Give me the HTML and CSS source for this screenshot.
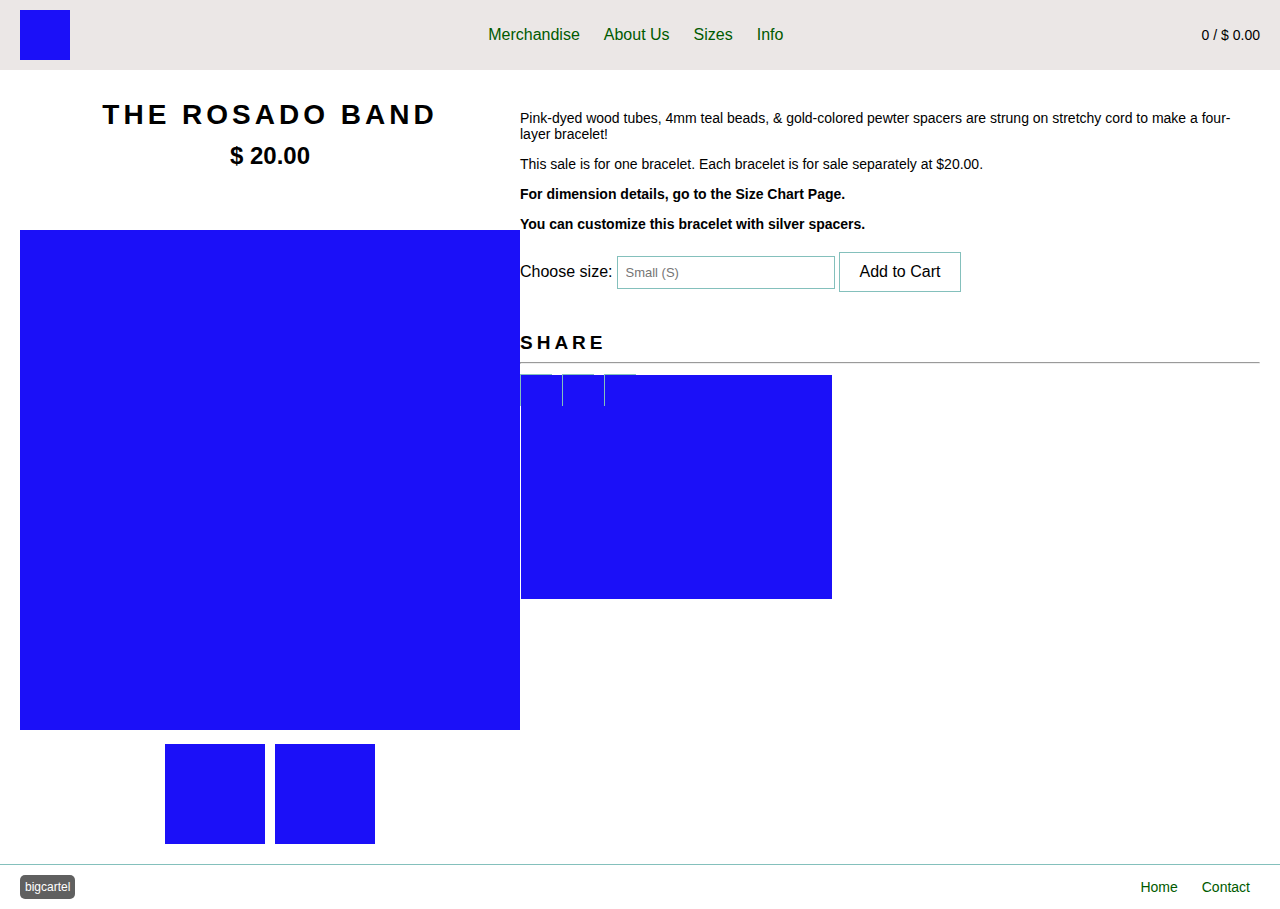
FILE: index.html
```html
<!DOCTYPE html>
<html lang="en">
<head>
<meta charset="utf-8">
<meta name="viewport" content="width=device-width, initial-scale=1">
<title>The Rosado Band</title>
<link rel="stylesheet" href="styles.css">
</head>
<body>
<header class="site-header">
  <a class="logo" href="#" aria-label="Shop home"></a>
  <nav class="main-nav">
    <a href="#">Merchandise</a>
    <a href="#">About Us</a>
    <a href="#">Sizes</a>
    <a href="#">Info</a>
  </nav>
  <a class="cart" href="#">0 / $ 0.00</a>
</header>
<main class="product">
  <section class="gallery">
    <h1 class="title">The Rosado Band</h1>
    <h2 class="price">$ 20.00</h2>
    <div class="photo"></div>
    <div class="thumbs">
      <a class="thumb" href="#" aria-label="Photo 1"></a>
      <a class="thumb" href="#" aria-label="Photo 2"></a>
    </div>
  </section>
  <section class="details">
    <div class="description">
      <p>Pink-dyed wood tubes, 4mm teal beads, &amp; gold-colored pewter spacers are strung on stretchy cord to make a four-layer bracelet!</p>
      <p>This sale is for one bracelet. Each bracelet is for sale separately at $20.00.</p>
      <p><strong>For dimension details, go to the Size Chart Page.</strong></p>
      <p><strong>You can customize this bracelet with silver spacers.</strong></p>
    </div>
    <form class="order">
      <label for="size">Choose size:</label>
      <input class="size" id="size" type="text" placeholder="Small (S)">
      <button class="add" type="button">Add to Cart</button>
    </form>
    <h3 class="share-title">Share</h3>
    <hr class="rule">
    <div class="share">
      <a class="share-link" href="#" aria-label="Share 1"><span class="share-image"></span></a>
      <a class="share-link" href="#" aria-label="Share 2"><span class="share-image"></span></a>
      <a class="share-link" href="#" aria-label="Share 3"><span class="share-image"></span></a>
    </div>
  </section>
</main>
<footer class="site-footer">
  <a class="badge" href="#">bigcartel</a>
  <nav class="footer-nav">
    <a href="#">Home</a>
    <a href="#">Contact</a>
  </nav>
</footer>
</body>
</html>
```

FILE: styles.css
```css
* { box-sizing: border-box; }

body {
  margin: 0;
  background: #fff;
  color: #000;
  font: 16px/18px "Liberation Sans", Arial, sans-serif;
}

a { color: #005a00; text-decoration: none; }

.site-header {
  display: flex;
  justify-content: space-between;
  align-items: center;
  padding: 10px 20px;
  background: #ebe7e6;
}

.logo { width: 50px; height: 50px; background: #1b10f8; }

.main-nav { display: flex; gap: 24px; }

.cart { color: #000; font-size: 14px; }

.product {
  display: flex;
  align-items: flex-start;
  padding: 0 20px 20px;
}

.gallery { flex: 0 0 500px; text-align: center; }

.title {
  margin: 28px 0 0;
  font-size: 28px;
  line-height: 34px;
  letter-spacing: 4px;
  text-transform: uppercase;
}

.price { margin: 10px 0 60px; font-size: 24px; line-height: 28px; }

.photo { aspect-ratio: 1; background: #1b10f8; }

.thumbs {
  display: flex;
  justify-content: center;
  gap: 10px;
  margin-top: 14px;
}

.thumb { width: 100px; height: 100px; background: #1b10f8; }

.details { flex: 1; min-width: 0; padding-top: 40px; }

.description {
  display: grid;
  gap: 14px;
  font-size: 14px;
  line-height: 16px;
}

.description p { margin: 0; }

.order {
  display: flex;
  align-items: center;
  gap: 4px;
  margin-top: 20px;
}

.size {
  width: 218px;
  height: 33px;
  padding: 0 8px;
  border: 1px solid #84c0bc;
  border-radius: 0;
  background: #fff;
  font: 13px "Liberation Sans", Arial, sans-serif;
}

.size::placeholder { color: #757575; }

.add {
  padding: 10px 20px;
  border: 1px solid #84c0bc;
  background: #fff;
  color: #000;
  font: inherit;
}

.share-title {
  margin: 40px 0 8px;
  font-size: 19px;
  line-height: 22px;
  letter-spacing: 4px;
  text-transform: uppercase;
}

.rule { margin: 0; }

.share { display: flex; gap: 10px; margin-top: 10px; }

.share-link {
  width: 32px;
  height: 32px;
  border: 1px solid #84c0bc;
}

.share-image {
  display: block;
  width: 227px;
  height: 224px;
  background: #1b10f8;
}

.site-footer {
  display: flex;
  justify-content: space-between;
  align-items: center;
  padding: 10px 30px 10px 20px;
  border-top: 1px solid #84c0bc;
  font-size: 14px;
}

.badge {
  padding: 3px 5px;
  border-radius: 5px;
  background: #606060;
  color: #fff;
  font-size: 12px;
}

.footer-nav { display: flex; gap: 24px; }
```
